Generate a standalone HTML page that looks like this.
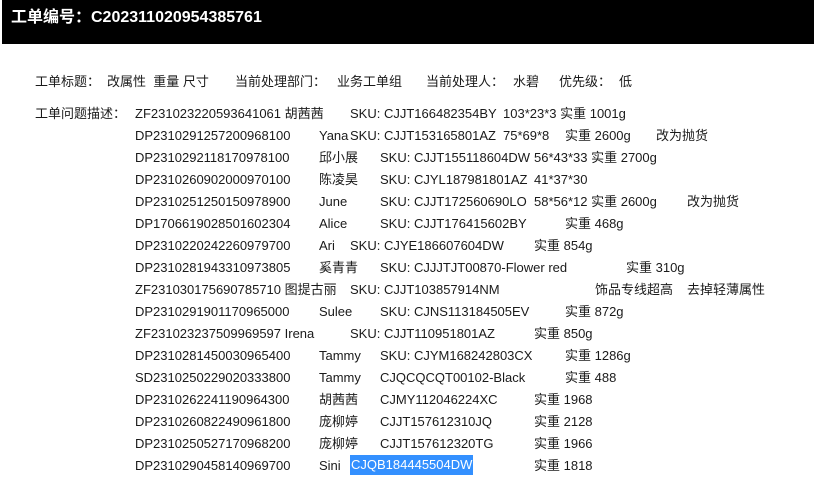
<!DOCTYPE html>
<html><head><meta charset="utf-8"><style>
body{margin:0;width:814px;height:475px;overflow:hidden;background:#fff;font-family:"Liberation Sans","Noto Sans CJK SC",sans-serif;font-size:13px;color:#1a1a1a;position:relative}
.hd{position:absolute;left:2px;top:0;width:812px;height:44px;background:#000;color:#fff;font-weight:bold;font-size:16px;line-height:36px;box-sizing:border-box;padding-left:9px}
.c{position:absolute;left:0;top:2px;width:814px;height:475px}
span{position:absolute;white-space:nowrap;line-height:18px}
.sel{background:#3390ff;color:#fff}
</style></head><body>
<div class="hd">工单编号：C20231102095438576​1</div>
<div class="c">
<span style="left:35px;top:71px">工单标题：</span><span style="left:107px;top:71px">改属性&nbsp; 重量 尺寸</span>
<span style="left:235px;top:71px">当前处理部门：</span><span style="left:337px;top:71px">业务工单组</span>
<span style="left:426px;top:71px">当前处理人：</span><span style="left:513px;top:71px">水碧</span>
<span style="left:559px;top:71px">优先级：</span><span style="left:619px;top:71px">低</span>
<span style="left:35px;top:103px">工单问题描述：</span>

<span style="left:135px;top:103px">ZF231023220593641061 胡茜茜</span><span style="left:350px;top:103px">SKU: CJJT166482354BY</span><span style="left:503px;top:103px">103*23*3 实重 1001g</span>

<span style="left:135px;top:125px">DP2310291257200968100</span><span style="left:319px;top:125px">Yana</span><span style="left:350px;top:125px">SKU: CJJT153165801AZ</span><span style="left:503px;top:125px">75*69*8</span><span style="left:565px;top:125px">实重 2600g</span><span style="left:656px;top:125px">改为抛货</span>

<span style="left:135px;top:147px">DP2310292118170978100</span><span style="left:319px;top:147px">邱小展</span><span style="left:380px;top:147px">SKU: CJJT155118604DW</span><span style="left:534px;top:147px">56*43*33 实重 2700g</span>

<span style="left:135px;top:169px">DP2310260902000970100</span><span style="left:319px;top:169px">陈凌昊</span><span style="left:380px;top:169px">SKU: CJYL187981801AZ</span><span style="left:534px;top:169px">41*37*30</span>

<span style="left:135px;top:191px">DP2310251250150978900</span><span style="left:319px;top:191px">June</span><span style="left:380px;top:191px">SKU: CJJT172560690LO</span><span style="left:534px;top:191px">58*56*12 实重 2600g</span><span style="left:687px;top:191px">改为抛货</span>

<span style="left:135px;top:213px">DP1706619028501602304</span><span style="left:319px;top:213px">Alice</span><span style="left:380px;top:213px">SKU: CJJT176415602BY</span><span style="left:565px;top:213px">实重 468g</span>

<span style="left:135px;top:235px">DP2310220242260979700</span><span style="left:319px;top:235px">Ari</span><span style="left:350px;top:235px">SKU: CJYE186607604DW</span><span style="left:534px;top:235px">实重 854g</span>

<span style="left:135px;top:257px">DP2310281943310973805</span><span style="left:319px;top:257px">奚青青</span><span style="left:380px;top:257px">SKU: CJJJTJT00870-Flower red</span><span style="left:626px;top:257px">实重 310g</span>

<span style="left:135px;top:279px">ZF231030175690785710 图提古丽</span><span style="left:350px;top:279px">SKU: CJJT103857914NM</span><span style="left:595px;top:279px">饰品专线超高</span><span style="left:687px;top:279px">去掉轻薄属性</span>

<span style="left:135px;top:301px">DP2310291901170965000</span><span style="left:319px;top:301px">Sulee</span><span style="left:380px;top:301px">SKU: CJNS113184505EV</span><span style="left:565px;top:301px">实重 872g</span>

<span style="left:135px;top:323px">ZF231023237509969597 Irena</span><span style="left:350px;top:323px">SKU: CJJT110951801AZ</span><span style="left:534px;top:323px">实重 850g</span>

<span style="left:135px;top:345px">DP2310281450030965400</span><span style="left:319px;top:345px">Tammy</span><span style="left:380px;top:345px">SKU: CJYM168242803CX</span><span style="left:565px;top:345px">实重 1286g</span>

<span style="left:135px;top:367px">SD2310250229020333800</span><span style="left:319px;top:367px">Tammy</span><span style="left:380px;top:367px">CJQCQCQT00102-Black</span><span style="left:565px;top:367px">实重 488</span>

<span style="left:135px;top:389px">DP2310262241190964300</span><span style="left:319px;top:389px">胡茜茜</span><span style="left:380px;top:389px">CJMY112046224XC</span><span style="left:534px;top:389px">实重 1968</span>

<span style="left:135px;top:411px">DP2310260822490961800</span><span style="left:319px;top:411px">庞柳婷</span><span style="left:380px;top:411px">CJJT157612310JQ</span><span style="left:534px;top:411px">实重 2128</span>

<span style="left:135px;top:433px">DP2310250527170968200</span><span style="left:319px;top:433px">庞柳婷</span><span style="left:380px;top:433px">CJJT157612320TG</span><span style="left:534px;top:433px">实重 1966</span>

<span style="left:135px;top:455px">DP2310290458140969700</span><span style="left:319px;top:455px">Sini</span><span class="sel" style="left:350px;top:453px;padding:1px 1px">CJQB184445504DW</span><span style="left:534px;top:455px">实重 1818</span>
</div>
</body></html>
